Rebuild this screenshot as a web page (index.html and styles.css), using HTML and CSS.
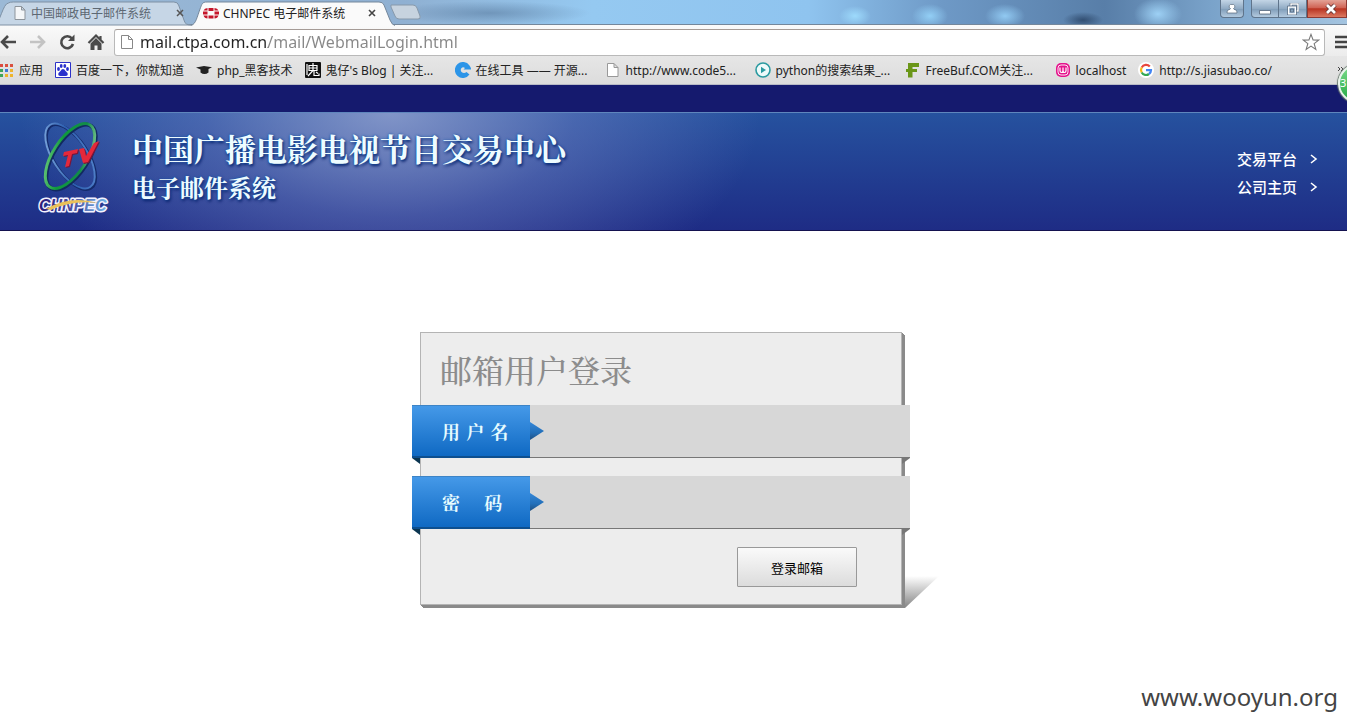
FILE: index.html
```html
<!DOCTYPE html>
<html lang="zh-CN">
<head>
<meta charset="utf-8">
<title>CHNPEC 电子邮件系统</title>
<link rel="stylesheet" href="styles.css">
</head>
<body>
<div class="browser">
  <div class="titlebar">
    <nav class="tabs" aria-label="标签页">
      <div class="tab tab-back">
        <svg class="tab-shape" viewBox="0 0 200 25" preserveAspectRatio="none"><path d="M-6 25C0 24 3 3 9 3Q10 2 14 2H182Q186 2 187 5L193 21Q194 25 200 25Z" fill="#c6d6e6" stroke="#7d8fa3"/></svg>
        <svg class="icon tab-page" viewBox="0 0 16 16"><path d="M3 1.500h6.500l3.500 3.500v9.500h-10zM9.500 1.500v3.500h3.500" fill="#f4f6f8" stroke="#8d949b"/></svg>
        <a class="tab-title" href="#">中国邮政电子邮件系统</a>
        <button class="tab-close" aria-label="关闭"><svg viewBox="0 0 8 8"><path d="M1 1l6 6M7 1l-6 6" stroke="#555" stroke-width="1.500"/></svg></button>
      </div>
      <div class="tab tab-front">
        <svg class="tab-shape" viewBox="0 0 204 25" preserveAspectRatio="none"><path d="M0 25.500C5 24 6 17 9 9C11 4 11 2 16 2H188Q192 2 193 5L199 20Q201 25 204 25.500" fill="#fafafa" stroke="#74879b"/></svg>
        <svg class="icon" viewBox="0 0 16 16"><path d="M5.500 3h5v3h-5zM5.500 10.500h5v3h-5zM0 6.500h4.500v3h-4.500zM11.500 6.500h4.500v3h-4.500zM4.500 3v2.500h-4q1-2.500 4-2.500M11.500 3q3 0 4 2.500h-4zM.5 10.500h4v3q-3 0-4-3M11.500 10.500h4q-1 3-4 3z" fill="#c5162b"/></svg>
        <a class="tab-title" href="#">CHNPEC 电子邮件系统</a>
        <button class="tab-close" aria-label="关闭"><svg viewBox="0 0 8 8"><path d="M1 1l6 6M7 1l-6 6" stroke="#444" stroke-width="1.600"/></svg></button>
      </div>
      <button class="tab-new" aria-label="新标签页"><svg viewBox="0 0 32 16"><path d="M1 1H23Q26 1 27 4L30 12Q31 15 28 15H9Q6 15 5 12L1 3Z" fill="#c7d3df" stroke="#8799ab"/></svg></button>
    </nav>
    <div class="window-buttons">
      <button class="win win-user" aria-label="用户"><svg viewBox="0 0 12 12"><path d="M6 1.500a2 2 0 0 1 1.500 4q0 1 2.500 1.500 1 .5 1 3h-10q0-2.500 1-3 2.500-.5 2.500-1.500a2 2 0 0 1 1.500-4z" fill="#fff" stroke="#56687c" stroke-width=".7"/></svg></button>
      <button class="win win-min" aria-label="最小化"><svg viewBox="0 0 12 12"><path d="M.5 7.500h11v3.500h-11z" fill="#fff" stroke="#53657a" stroke-width=".8"/></svg></button>
      <button class="win win-restore" aria-label="还原"><svg viewBox="0 0 12 12"><path d="M4 3v-2h7v7h-2" fill="none" stroke="#43566c" stroke-width="2.600"/><path d="M4 3v-2h7v7h-2M1.500 4h7v7h-7z" fill="none" stroke="#fff" stroke-width="1.500"/><path d="M.5 3h9v9h-9zM3.500 6h3v3h-3z" fill="none" stroke="#43566c" stroke-width=".6"/></svg></button>
      <button class="win win-close" aria-label="关闭窗口"><svg viewBox="0 0 12 12"><path d="M2 2l8 8M10 2l-8 8" stroke="#5d3030" stroke-width="4.400"/><path d="M2 2l8 8M10 2l-8 8" stroke="#fff" stroke-width="2.800"/></svg></button>
    </div>
  </div>

  <div class="toolbar">
    <button class="tool" aria-label="后退"><svg viewBox="0 0 18 18"><path d="M16 9H2M8 3L2 9l6 6" fill="none" stroke="#4a4a4a" stroke-width="2.600"/></svg></button>
    <button class="tool" aria-label="前进"><svg viewBox="0 0 18 18"><path d="M1 9h14M9 3l6 6-6 6" fill="none" stroke="#c3c3c3" stroke-width="2.600"/></svg></button>
    <button class="tool" aria-label="重新加载"><svg viewBox="0 0 18 18"><path d="M14 5.500A6 6 0 1 0 15 11" fill="none" stroke="#4a4a4a" stroke-width="2.600"/><path d="M16.500 1.500v6.500h-6.500z" fill="#4a4a4a"/></svg></button>
    <button class="tool" aria-label="主页"><svg viewBox="0 0 18 18"><path d="M1.500 10L9 2.500l7.500 7.500M13.500 7V3" fill="none" stroke="#4a4a4a" stroke-width="2.200"/><path d="M3.500 10.500L9 5l5.500 5.500V17h-4v-4.500h-3V17h-4z" fill="#4a4a4a"/></svg></button>
    <div class="omnibox">
      <svg class="icon" viewBox="0 0 16 16"><path d="M2.500 1.500h7l4 4v9h-11zM9.500 1.500v4h4" fill="#fff" stroke="#888"/></svg>
      <input class="address" type="text" aria-label="地址" value="mail.ctpa.com.cn/mail/WebmailLogin.html">
      <button class="star" aria-label="收藏"><svg viewBox="0 0 20 20"><path d="M10 1.500l2.300 6.200 6.200.2-5 3.900 1.900 6.400-5.400-3.700-5.400 3.700 1.900-6.400-5-3.900 6.200-.2z" fill="#fff" stroke="#777" stroke-width="1.200"/></svg></button>
    </div>
    <button class="menu" aria-label="菜单"><svg viewBox="0 0 16 16"><path d="M0 3h16M0 8h16M0 13h16" stroke="#444" stroke-width="2.600"/></svg></button>
  </div>

  <nav class="bookmarks" aria-label="书签">
    <a class="bookmark" href="#"><svg class="icon" viewBox="0 0 16 16"><path d="M2 2h3v3h-3z" fill="#dc4b3e"/><path d="M7 2h3v3h-3zM12 2h3v3h-3z" fill="#d9503f"/><path d="M2 7h3v3h-3zM2 12h3v3h-3z" fill="#3fa45b"/><path d="M7 7h3v3h-3z" fill="#3f79d8"/><path d="M7 12h3v3h-3zM12 12h3v3h-3zM12 7h3v3h-3z" fill="#eeb42c"/></svg><span>应用</span></a>
    <a class="bookmark" href="#"><svg class="icon" viewBox="0 0 16 16"><path d="M.5.5h15v15h-15z" fill="#fff" stroke="#2d32c8"/><g fill="#2a31cc"><ellipse cx="3.500" cy="7" rx="1.400" ry="1.900"/><ellipse cx="6.200" cy="4" rx="1.400" ry="2"/><ellipse cx="9.800" cy="4" rx="1.400" ry="2"/><ellipse cx="12.500" cy="7" rx="1.400" ry="1.900"/><path d="M8 7q1.500 0 2.500 2l2 2q1 3-2 3H5.500q-3 0-2-3l2-2q1-2 2.500-2z"/></g></svg><span>百度一下，你就知道</span></a>
    <a class="bookmark" href="#"><svg class="icon" viewBox="0 0 16 16"><path d="M0 5.500L8 4l8 1.300-3.500 1.700v3.500q-4 3-8 0V7.500z" fill="#222"/></svg><span>php_黑客技术</span></a>
    <a class="bookmark bookmark-long" href="#"><svg class="icon" viewBox="0 0 16 16"><rect width="16" height="16" rx="1" fill="#111"/><path d="M8 1v2M4 3.500h8v5h-8zM4 6h8M8 3v5.500L3 14M9 9v4.500h5v-2M11 10l2 1.500M2 2v11" fill="none" stroke="#fff" stroke-width="1.200"/></svg><span>鬼仔's Blog | 关注...</span></a>
    <a class="bookmark bookmark-long" href="#"><svg class="icon" viewBox="0 0 16 16"><path d="M14.500 3.500A8 8 0 1 0 14.500 12.500L11.500 10Q9 12 6.500 10 5 8 6.500 6 8 4.500 10 6L8.500 7.500H16q0-2-1.500-4z" fill="#2c95e8"/></svg><span>在线工具 —— 开源...</span></a>
    <a class="bookmark bookmark-long" href="#"><svg class="icon" viewBox="0 0 16 16"><path d="M2.500 1.500h6.500l4 4v9h-10.500zM9 1.500v4h4" fill="#fff" stroke="#999"/></svg><span>http://www.code5...</span></a>
    <a class="bookmark bookmark-long" href="#"><svg class="icon" viewBox="0 0 16 16"><circle cx="8" cy="8" r="7" fill="#eefafa" stroke="#2b9aa0" stroke-width="1.600"/><path d="M6 4.800l5 3.200-5 3.200z" fill="#2b9aa0"/></svg><span>python的搜索结果_...</span></a>
    <a class="bookmark bookmark-long" href="#"><svg class="icon" viewBox="0 0 16 16"><path d="M3 1h11v4H7.500v2H12v3H7.500v5.500H3V10H1V7h2z" fill="#6a9618"/></svg><span>FreeBuf.COM关注...</span></a>
    <a class="bookmark" href="#"><svg class="icon" viewBox="0 0 16 16"><rect x="1" y="1" width="14" height="14" rx="5" fill="#e5138c"/><rect x="3" y="3" width="10" height="10" rx="3" fill="none" stroke="#fff" stroke-width=".9"/><path d="M5 5.500v3q0 2 1.500 2T8 8.500v-3 3q0 2 1.500 2t1.500-2v-3" fill="none" stroke="#fff" stroke-width="1.200"/></svg><span>localhost</span></a>
    <a class="bookmark" href="#"><svg class="icon" viewBox="0 0 16 16"><circle cx="8" cy="8" r="8" fill="#fff"/><g fill="none" stroke-width="2.200"><path d="M11.800 4.600A5 5 0 0 0 3.700 5.500" stroke="#e8453c"/><path d="M3.700 5.500a5 5 0 0 0 0 5" stroke="#f5b914"/><path d="M3.700 10.500a5 5 0 0 0 7.300 1.500" stroke="#34a853"/><path d="M11 12q2-1.500 2-3.800H8" stroke="#4285f4"/></g></svg><span>http://s.jiasubao.co/</span></a>
    <button class="bookmark-more" aria-label="更多书签"><svg viewBox="0 0 8 8"><path d="M1 1l2 2-2 2M4 1l2 2-2 2" fill="none" stroke="#444"/></svg></button>
  </nav>
  <div class="speed-badge">3</div>
</div>

<header class="site-header">
  <div class="brand">
    <svg class="logo" viewBox="0 0 72 96" role="img" aria-label="CHNPEC">
      <defs>
        <linearGradient id="green" x1="0" y1="1" x2="1" y2="0"><stop offset="0" stop-color="#86d690"/><stop offset=".35" stop-color="#0f9a3c"/><stop offset=".7" stop-color="#128a4a"/><stop offset="1" stop-color="#a9e2b0"/></linearGradient>
        <linearGradient id="blue" x1="0" y1="0" x2="1" y2="1"><stop offset="0" stop-color="#8db6e6"/><stop offset=".5" stop-color="#2c5eb0"/><stop offset="1" stop-color="#5a8ad0"/></linearGradient>
        <linearGradient id="word" x1="0" y1="0" x2="1" y2="0"><stop offset="0" stop-color="#2b1a78"/><stop offset=".45" stop-color="#4a4a9c"/><stop offset="1" stop-color="#6fb4e6"/></linearGradient>
      </defs>
      <g fill="none">
        <ellipse cx="35" cy="36" rx="17" ry="37" transform="rotate(-33 35 36)" stroke="#142b6c" stroke-width="3"/>
        <ellipse cx="34" cy="35" rx="17" ry="37" transform="rotate(-33 34 35)" stroke="url(#blue)" stroke-width="2"/>
        <ellipse cx="35" cy="36" rx="17" ry="37" transform="rotate(33 35 36)" stroke="#112a60" stroke-width="4"/>
        <ellipse cx="34" cy="35" rx="17" ry="37" transform="rotate(33 34 35)" stroke="url(#green)" stroke-width="3"/>
      </g>
      <path d="M28 31l14-3-1 4-5 1-3 12-4 1 3-12-5 1zM43 28l5-1 2 8 8-13 5-2-11 21-5 1z" fill="#7b1538" transform="translate(1 1)"/>
      <path d="M28 31l14-3-1 4-5 1-3 12-4 1 3-12-5 1zM43 28l5-1 2 8 8-13 5-2-11 21-5 1z" fill="#e5283b"/>
      <text class="logo-word" x="3" y="90" fill="url(#word)">CHNPEC</text>
      <path d="M10 88Q34 74 62 82Q36 79 15 89z" fill="#e9c25a"/>
    </svg>
    <div class="brand-text">
      <h1 class="org-name">中国广播电影电视节目交易中心</h1>
      <p class="system-name">电子邮件系统</p>
    </div>
  </div>
  <nav class="site-links" aria-label="站点">
    <a class="site-link" href="#">交易平台<svg viewBox="0 0 8 10"><path d="M1 1l5 4-5 4" fill="none" stroke="#fff" stroke-width="1.600"/></svg></a>
    <a class="site-link" href="#">公司主页<svg viewBox="0 0 8 10"><path d="M1 1l5 4-5 4" fill="none" stroke="#fff" stroke-width="1.600"/></svg></a>
  </nav>
</header>

<main class="content">
  <div class="login-wrap">
    <form class="login-card">
      <h2 class="login-title">邮箱用户登录</h2>
      <div class="field">
        <label class="field-label" for="user">用 户 名</label>
        <input class="field-input" id="user" type="text">
      </div>
      <div class="field">
        <label class="field-label" for="pass">密&emsp; 码</label>
        <input class="field-input" id="pass" type="password">
      </div>
      <div class="actions"><button class="submit" type="button">登录邮箱</button></div>
    </form>
  </div>
</main>
<footer class="watermark">www.wooyun.org</footer>
</body>
</html>
```
FILE: styles.css
```css
* { box-sizing: border-box; }

body {
  margin: 0;
  overflow-x: hidden;
  background: #fff;
  font-family: "Noto Sans", "Noto Sans CJK SC", sans-serif;
  font-size: 12px;
  color: #222;
}

a { color: inherit; text-decoration: none; }
svg { display: block; }
button {
  padding: 0;
  border: 0;
  background: none;
  font: inherit;
  color: inherit;
}
.icon { width: 16px; height: 16px; flex: none; }

/* Browser window */
.browser { position: relative; }

.titlebar {
  display: flex;
  justify-content: space-between;
  height: 25px;
  border-bottom: 1px solid #74879b;
  background:
    radial-gradient(ellipse 100px 12px at 490px 13px, rgba(72, 104, 140, .45), transparent),
    radial-gradient(ellipse 16px 10px at 855px 16px, rgba(160, 222, 255, .9), transparent),
    radial-gradient(ellipse 18px 12px at 930px 16px, rgba(150, 212, 250, .9), transparent),
    radial-gradient(ellipse 20px 12px at 1005px 16px, rgba(150, 208, 248, .9), transparent),
    radial-gradient(ellipse 20px 8px at 1083px 20px, rgba(40, 66, 100, .8), transparent),
    radial-gradient(ellipse 24px 16px at 1158px 14px, rgba(160, 212, 248, .95), transparent),
    linear-gradient(to right, #9bb9d6 0, #8fb0d2 30%, #95c9f1 44%, #8fc4ef 60%, #6e99c6 70%, #587ea8 82%, #7aa3ca 90%, #a4c4e0);
}

.tabs { display: flex; }
.tab {
  position: relative;
  display: flex;
  align-items: center;
  height: 25px;
}
.tab-back { width: 191px; padding-left: 12px; color: #5d6873; }
.tab-front { width: 204px; padding-left: 12px; color: #222; z-index: 1; }
.tab-shape { position: absolute; inset: 0; width: 100%; height: 100%; overflow: visible; }
.tab > :not(.tab-shape) { position: relative; }
.tab-title { width: 145px; margin-left: 3px; white-space: nowrap; }
.tab-front .tab-title { margin-left: 4px; }
.tab-close svg { width: 8px; height: 8px; }
.tab-new { margin-left: -5px; }
.tab-new svg { width: 32px; height: 16px; }

.window-buttons { display: flex; align-items: flex-start; }
.win {
  display: grid;
  place-items: center;
  height: 18px;
  border: 1px solid #5f748b;
  border-top: 0;
  background: linear-gradient(#c3d5e6, #91abc4 50%, #7f9cb8 52%, #b3cadf);
}
.win svg { width: 12px; height: 12px; }
.win-user { width: 24px; margin-right: 7px; border-radius: 0 0 4px 4px; }
.win-min { width: 28px; border-radius: 0 0 0 4px; }
.win-restore { width: 28px; border-left: 0; }
.win-close { width: 40px; padding-left: 8px; border-color: #8c3a34; background: linear-gradient(#e3a296, #d06455 45%, #b93422 52%, #dc7a62); }

.toolbar {
  display: flex;
  align-items: center;
  height: 31px;
  padding-top: 3px;
  background: linear-gradient(#fafafa, #ececec);
}
.tool { width: 29px; }
.tool svg { width: 18px; height: 18px; }
.omnibox {
  display: flex;
  flex: 1;
  align-items: center;
  height: 27px;
  margin-left: -2px;
  padding: 0 4px;
  border: 1px solid #b9b9b9;
  border-top-color: #a59b96;
  border-radius: 3px;
  background: #fff;
}
.address {
  flex: 1;
  height: 24px;
  margin-left: 5px;
  padding: 0;
  border: 0;
  outline: 0;
  background: linear-gradient(to right, #222 128px, #888 128px);
  background-clip: text;
  -webkit-background-clip: text;
  -webkit-text-fill-color: transparent;
  font-family: "Noto Sans", sans-serif;
  font-size: 16px;
}
.star svg { width: 18px; height: 18px; }
.menu { width: 12px; margin-left: 10px; overflow: hidden; }
.menu svg { width: 16px; height: 16px; }

.bookmarks {
  display: flex;
  align-items: center;
  gap: 12px;
  height: 29px;
  overflow: hidden;
  border-bottom: 1px solid #b8bac6;
  background: linear-gradient(#e6e6e6, #dcdcdc);
  color: #222;
}
.bookmark { display: flex; flex: none; align-items: center; gap: 5px; white-space: nowrap; }
.bookmark:first-child { margin-left: -2px; }
.bookmark-long { width: 138px; }
.bookmark-more { margin-left: auto; padding-right: 2px; }
.bookmark-more svg { width: 8px; height: 8px; }

.speed-badge {
  position: absolute;
  top: 64px;
  right: -30px;
  width: 39px;
  height: 39px;
  border: 2px solid #e8f3ea;
  border-radius: 50%;
  background: linear-gradient(#7edc8b, #23a845);
  box-shadow: 0 0 1px 1px #6a7a70;
  color: #fff;
  font-size: 11px;
  line-height: 34px;
}

/* Site header */
.site-header {
  display: flex;
  align-items: flex-start;
  justify-content: space-between;
  padding: 9px 29px 13px 36px;
  border-top: 27px solid #151a6e;
  border-bottom: 1px solid #14124f;
  background:
    linear-gradient(#5f86bd, #5f86bd) 0 0 / 100% 1px no-repeat,
    radial-gradient(ellipse 370px 210px at 390px 0, rgba(160, 172, 214, .75), rgba(120, 135, 200, .42) 50%, transparent),
    linear-gradient(#26529f, #1e2c85);
  background-color: #1e2c85;
}
.brand { display: flex; align-items: flex-start; }
.logo { width: 72px; height: 96px; overflow: visible; }
.logo-word {
  font: italic 700 16px "Liberation Sans", sans-serif;
  stroke: #f4f2ff;
  stroke-width: 3px;
  paint-order: stroke;
  stroke-linejoin: round;
}
.brand-text { margin: 8px 0 0 24px; }
.org-name, .system-name {
  margin: 0;
  color: #eefcff;
  font-family: "Noto Serif CJK SC", "Noto Sans CJK SC", serif;
  font-weight: 700;
  white-space: nowrap;
  text-shadow: 0 0 3px #0a54a8, 1px 2px 3px #0c1f66;
}
.org-name { font-size: 31px; line-height: 38px; }
.system-name { font-size: 24px; line-height: 40px; }

.site-links { display: flex; flex-direction: column; padding-top: 24px; }
.site-link {
  display: flex;
  align-items: center;
  gap: 13px;
  color: #fff;
  font-family: "Noto Sans CJK SC", sans-serif;
  font-size: 15px;
  font-weight: 500;
  line-height: 28px;
}
.site-link svg { width: 8px; height: 10px; }

/* Login */
.content { display: flex; justify-content: center; padding: 101px 0 0; }
.login-wrap { width: 523px; padding-left: 8px; }
.login-card {
  position: relative;
  width: 482px;
  padding-bottom: 17px;
  border: 1px solid #b4b4b4;
  background: #ededed;
  box-shadow: 1px 1px #8a8a8a, 2px 2px #8a8a8a, 3px 3px #8a8a8a;
}
.login-card::after {
  content: "";
  position: absolute;
  left: 484px;
  bottom: -4px;
  width: 34px;
  height: 32px;
  background: linear-gradient(rgba(140, 140, 140, 0), #858585);
  clip-path: polygon(0 0, 100% 0, 0 100%);
}
.login-title {
  margin: 0;
  padding: 12px 0 12px 19px;
  color: #8c8c8c;
  font-family: "Noto Serif CJK SC", "Noto Sans CJK SC", serif;
  font-size: 32px;
  font-weight: 500;
  line-height: 48px;
}
.field {
  position: relative;
  display: flex;
  height: 53px;
  margin: 0 -9px 18px;
  border-bottom: 1px solid #777;
  background: #d7d7d7;
}
.field::before, .field::after {
  content: "";
  position: absolute;
  top: 53px;
  width: 8px;
  height: 6px;
}
.field::before { left: 0; background: #0b3550; clip-path: polygon(0 0, 100% 0, 100% 100%); }
.field::after { right: 0; background: #777; clip-path: polygon(0 0, 100% 0, 0 100%); }
.field-label {
  position: relative;
  width: 118px;
  height: 53px;
  padding-left: 30px;
  border-top: 1px solid #3d84c6;
  border-bottom: 2px solid #0d4f8f;
  background: linear-gradient(#4599e8, #0f69c3);
  color: #e6fbff;
  font-family: "DejaVu Sans", "Noto Serif CJK SC", "Noto Sans CJK SC", sans-serif;
  font-size: 18px;
  font-weight: 700;
  line-height: 53px;
  white-space: pre;
}
.field-label::after {
  content: "";
  position: absolute;
  left: 118px;
  top: 16px;
  width: 14px;
  height: 18px;
  background: linear-gradient(#3587d8, #226fb9 60%, #1f4f80);
  clip-path: polygon(0 0, 100% 50%, 0 100%);
}
.field-input {
  flex: 1;
  min-width: 0;
  padding: 0 16px 0 24px;
  border: 0;
  outline: 0;
  background: transparent;
  font-size: 18px;
}
.actions { display: flex; justify-content: flex-end; padding-right: 44px; }
.submit {
  width: 120px;
  height: 40px;
  border: 1px solid #999;
  border-radius: 1px;
  background: linear-gradient(#fafafa, #dcdcdc);
  color: #000;
  font-family: "Noto Sans CJK SC", sans-serif;
  font-size: 13px;
}

.watermark {
  padding: 76px 9px 0 0;
  color: #444;
  font-size: 24px;
  line-height: 32px;
  text-align: right;
}
```
